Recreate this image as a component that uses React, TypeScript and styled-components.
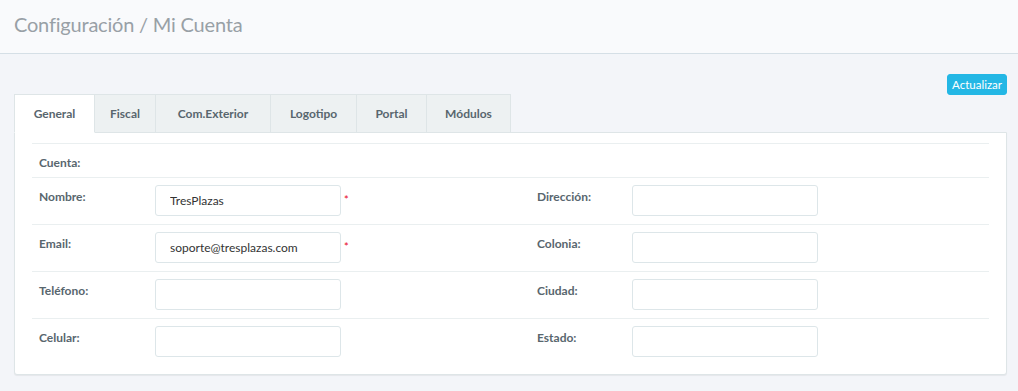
import React, { useState } from "react";
import styled, { createGlobalStyle } from "styled-components";

const GlobalStyle = createGlobalStyle`
  body {
    margin: 0;
    background: #f3f5f9;
    font-family: "Lato", "Open Sans", sans-serif;
    color: #58666e;
  }
`;

const Header = styled.div`
  height: 54px;
  box-sizing: border-box;
  background: #f9fafc;
  border-bottom: 1px solid #d5dfe6;
  display: flex;
  align-items: center;
  padding: 0 14px 5px;
`;

const Title = styled.h1`
  margin: 0;
  font-size: 20px;
  font-weight: 400;
  color: #98a0a6;
  letter-spacing: -0.2px;
`;

const Content = styled.div`
  padding: 20px 11px 16px 14px;
`;

const Toolbar = styled.div`
  display: flex;
  justify-content: flex-end;
  height: 20px;
`;

const UpdateButton = styled.button`
  height: 21px;
  padding: 0 4px;
  background: #23b7e5;
  border: 1px solid #23b7e5;
  border-radius: 3px;
  color: #fff;
  font-family: inherit;
  font-size: 11.5px;
  cursor: pointer;
`;

const Tabs = styled.div`
  display: flex;
  height: 39px;
`;

const Tab = styled.div<{ $active?: boolean; $w: number }>`
  display: flex;
  align-items: center;
  justify-content: center;
  width: ${(p) => p.$w}px;
  box-sizing: border-box;
  font-size: 12px;
  font-weight: 700;
  color: #58666e;
  background: ${(p) => (p.$active ? "#fff" : "#edf1f2")};
  border: 1px solid #dee5e7;
  border-bottom: 1px solid ${(p) => (p.$active ? "#fff" : "#dee5e7")};
  margin-right: -1px;
  position: relative;
  z-index: ${(p) => (p.$active ? 2 : 1)};
  cursor: pointer;
`;

const Panel = styled.div`
  background: #fff;
  border: 1px solid #dee5e7;
  border-radius: 0 0 3px 3px;
  box-shadow: 0 1px 1px rgba(0, 0, 0, 0.06);
  margin-top: -1px;
  padding: 10px 17px 10px 17px;
`;

const Row = styled.div<{ $short?: boolean }>`
  display: flex;
  border-top: 1px solid #eaeff0;
  height: ${(p) => (p.$short ? 34 : 47)}px;
  padding-top: 7px;
  box-sizing: border-box;

  &:last-child {
    height: 46px;
  }
`;

const Half = styled.div`
  display: flex;
  width: 478px;
  align-items: flex-start;
`;

const Label = styled.label<{ $w: number; $pad: number }>`
  width: ${(p) => p.$w}px;
  box-sizing: border-box;
  padding-left: ${(p) => p.$pad}px;
  padding-top: 4px;
  font-size: 12px;
  font-weight: 700;
  color: #58666e;
  flex-shrink: 0;
`;

const Input = styled.input`
  width: 186px;
  height: 31px;
  box-sizing: border-box;
  border: 1px solid #dde6e9;
  border-radius: 3px;
  padding: 0 14px;
  font-family: inherit;
  font-size: 12px;
  color: #333;
  outline: none;
`;

const Required = styled.span`
  color: #e8001c;
  font-size: 11px;
  margin-left: 3px;
  margin-top: 8px;
`;

const tabs = [
  { name: "General", w: 81 },
  { name: "Fiscal", w: 62 },
  { name: "Com.Exterior", w: 116 },
  { name: "Logotipo", w: 87 },
  { name: "Portal", w: 71 },
  { name: "Módulos", w: 85 },
];

type Field = { label: string; value?: string; required?: boolean };

const rows: [Field, Field][] = [
  [
    { label: "Nombre:", value: "TresPlazas", required: true },
    { label: "Dirección:" },
  ],
  [
    { label: "Email:", value: "soporte@tresplazas.com", required: true },
    { label: "Colonia:" },
  ],
  [{ label: "Teléfono:" }, { label: "Ciudad:" }],
  [{ label: "Celular:" }, { label: "Estado:" }],
];

const App = () => {
  const [active, setActive] = useState("General");

  return (
    <>
      <GlobalStyle />
      <Header>
        <Title>Configuración / Mi Cuenta</Title>
      </Header>
      <Content>
        <Toolbar>
          <UpdateButton>Actualizar</UpdateButton>
        </Toolbar>
        <Tabs>
          {tabs.map((t) => (
            <Tab
              key={t.name}
              $w={t.w}
              $active={active === t.name}
              onClick={() => setActive(t.name)}
            >
              {t.name}
            </Tab>
          ))}
        </Tabs>
        <Panel>
          <Row $short>
            <Label $w={123} $pad={7}>
              Cuenta:
            </Label>
          </Row>
          {rows.map(([left, right]) => (
            <Row key={left.label}>
              <Half>
                <Label $w={123} $pad={7}>
                  {left.label}
                </Label>
                <Input defaultValue={left.value} />
                {left.required && <Required>*</Required>}
              </Half>
              <Half>
                <Label $w={122} $pad={27}>
                  {right.label}
                </Label>
                <Input defaultValue={right.value} />
              </Half>
            </Row>
          ))}
        </Panel>
      </Content>
    </>
  );
};

export default App;
